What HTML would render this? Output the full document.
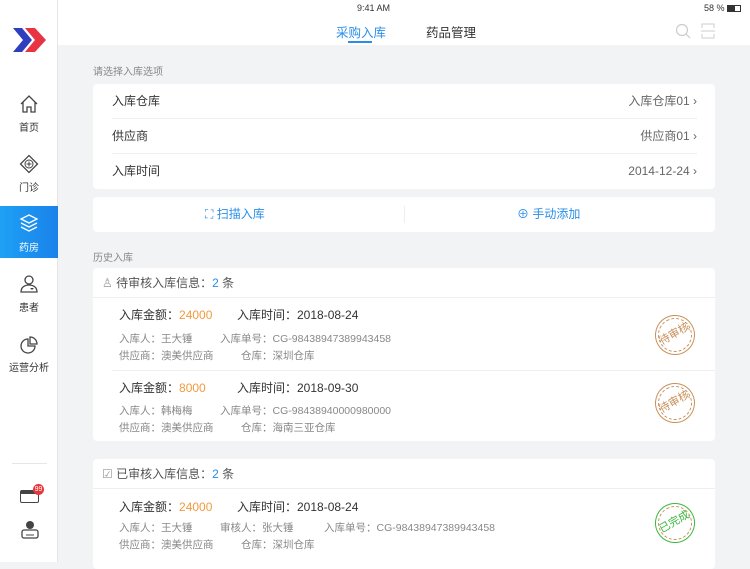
<!DOCTYPE html><html><head><meta charset="utf-8"><style>
*{margin:0;padding:0;box-sizing:border-box}
body{width:750px;height:562px;overflow:hidden;background:#f2f3f5;font-family:"Liberation Sans","Noto Sans CJK SC",sans-serif;position:relative;color:#333}
.a{position:absolute}
.side{left:0;top:0;width:58px;height:562px;background:#fff;border-right:1px solid #e6e6e6}
.nav{left:0;width:58px;text-align:center;font-size:10px;color:#333}
.card{background:#fff;border-radius:4px;left:93px;width:622px}
.row{left:19px;right:18px;height:35px;font-size:12px;line-height:35px;border-bottom:1px solid #eee}
.g{color:#888;font-size:10.5px}
.o{color:#f39a3c}
.stamp{width:40px;height:40px;border:1.5px solid #c8905a;border-radius:50%;color:#c8905a;font-size:11px;line-height:37px;text-align:center;transform:rotate(-30deg)}
.stamp:before{content:"";position:absolute;left:2px;top:2px;right:2px;bottom:2px;border:1px dashed #c8905a;border-radius:50%}
</style></head><body>
<div class="a" style="left:0;top:0;width:750px;height:45px;background:#fff"></div>
<div class="a" style="left:4px;top:3px;font-size:9px">GS ᯤ</div>
<div class="a" style="left:357px;top:3px;font-size:9px">9:41 AM</div>
<div class="a" style="left:704px;top:3px;font-size:9px">58 % <span style="display:inline-block;width:14px;height:7px;border:1px solid #333;vertical-align:-1px;background:linear-gradient(90deg,#333 58%,#fff 58%)"></span></div>
<div class="a" style="left:336px;top:22px;font-size:12.5px;color:#2a8ee8">采购入库</div>
<div class="a" style="left:348px;top:41px;width:24px;height:2px;background:#2a8ee8"></div>
<div class="a" style="left:426px;top:22px;font-size:12.5px">药品管理</div>
<svg class="a" style="left:675px;top:23px" width="40" height="16"><circle cx="7" cy="7" r="5.5" fill="none" stroke="#ccc" stroke-width="1.2"/><path d="M11 11l4 4" stroke="#ccc" stroke-width="1.2"/><path d="M27 5V1h12v4M27 11v4h12v-4M26 8h14" fill="none" stroke="#ccc"/></svg>
<div class="a side"></div>
<svg class="a" style="left:13px;top:28px" width="34" height="24"><path d="M0 0h9l10 12-10 12H0l10-12z" fill="#2d3fbf"/><path d="M12 0h10l11 12-11 12H12l10-12z" fill="#e63442"/></svg>
<svg class="a" style="left:19px;top:94px" width="20" height="20"><path d="M2 10L10 2l8 8M4 8v10h4v-5h4v5h4V8" fill="none" stroke="#444" stroke-width="1.3"/></svg>
<div class="a nav" style="top:119px">首页</div>
<svg class="a" style="left:19px;top:154px" width="20" height="20"><rect x="4" y="4" width="12" height="12" transform="rotate(45 10 10)" fill="none" stroke="#444" stroke-width="1.3"/><circle cx="10" cy="10" r="4" fill="none" stroke="#444"/><path d="M10 7.5v5M7.5 10h5" stroke="#444"/></svg>
<div class="a nav" style="top:179px">门诊</div>
<div class="a" style="left:0;top:206px;width:58px;height:52px;background:linear-gradient(90deg,#1ea0f5,#1a82ea)"></div>
<svg class="a" style="left:19px;top:213px" width="20" height="20"><path d="M10 2l8 4-8 4-8-4z M2 10l8 4 8-4 M2 14l8 4 8-4" fill="none" stroke="#fff" stroke-width="1.3"/></svg>
<div class="a nav" style="top:239px;color:#fff">药房</div>
<svg class="a" style="left:19px;top:274px" width="20" height="20"><circle cx="10" cy="6" r="4" fill="none" stroke="#444" stroke-width="1.3"/><path d="M2 18c0-5 4-7 8-7s8 2 8 7z" fill="none" stroke="#444" stroke-width="1.3"/><path d="M11 14h4l-2 2z" fill="#444"/></svg>
<div class="a nav" style="top:299px">患者</div>
<svg class="a" style="left:19px;top:335px" width="20" height="20"><path d="M9 4a7 7 0 1 0 7 7H9z" fill="none" stroke="#444" stroke-width="1.3"/><path d="M11 2a7 7 0 0 1 7 7h-7z" fill="none" stroke="#444" stroke-width="1.3"/></svg>
<div class="a nav" style="top:359px">运营分析</div>
<div class="a" style="left:12px;top:463px;width:35px;height:1px;background:#e6e6e6"></div>
<div class="a" style="left:20px;top:490px;width:19px;height:13px;border:1.5px solid #444;border-top:4px solid #444;border-radius:2px"></div>
<div class="a" style="left:33px;top:484px;width:11px;height:11px;background:#e8353b;border-radius:50%;color:#fff;font-size:7px;text-align:center;line-height:11px">99</div>
<svg class="a" style="left:20px;top:520px" width="20" height="20"><circle cx="10" cy="5" r="4" fill="#444"/><rect x="2" y="10" width="16" height="8" rx="2" fill="none" stroke="#444" stroke-width="1.3"/><path d="M6 15h8" stroke="#444"/></svg>
<div class="a g" style="left:93px;top:63px;font-size:10px">请选择入库选项</div>
<div class="a card" style="top:84px;height:105px">
 <div class="a row" style="top:0">入库仓库<span style="float:right;color:#666">入库仓库01 ›</span></div>
 <div class="a row" style="top:35px">供应商<span style="float:right;color:#666">供应商01 ›</span></div>
 <div class="a row" style="top:70px;border:none">入库时间<span style="float:right;color:#666">2014-12-24 ›</span></div>
</div>
<div class="a card" style="top:197px;height:35px;font-size:12px;color:#2a8ee8;line-height:35px">
 <div class="a" style="left:112px">⛶ 扫描入库</div>
 <div class="a" style="left:311px;top:9px;width:1px;height:17px;background:#eee"></div>
 <div class="a" style="left:424px">⊕ 手动添加</div>
</div>
<div class="a g" style="left:93px;top:249px;font-size:10px">历史入库</div>
<div class="a card" style="top:268px;height:173px">
 <div class="a" style="left:0;right:0;height:30px;border-bottom:1px solid #eee;line-height:30px;font-size:12px;color:#555;padding-left:9px"><span style="color:#999">♙</span> 待审核入库信息：<span style="color:#2a8ee8">2</span> 条</div>
 <div class="a" style="left:26px;top:38px;font-size:12px">入库金额：<span class="o">24000</span><span style="position:absolute;left:118px;white-space:nowrap">入库时间：2018-08-24</span></div>
 <div class="a g" style="left:26px;top:63px;white-space:nowrap">入库人：王大锤<span style="position:absolute;left:101px">入库单号：CG-98438947389943458</span></div>
 <div class="a g" style="left:26px;top:80px;white-space:nowrap">供应商：澳美供应商<span style="position:absolute;left:122px">仓库：深圳仓库</span></div>
 <div class="a stamp" style="left:562px;top:47px">待审核</div>
 <div class="a" style="left:19px;right:0;top:102px;height:1px;background:#eee"></div>
 <div class="a" style="left:26px;top:111px;font-size:12px">入库金额：<span class="o">8000</span><span style="position:absolute;left:118px;white-space:nowrap">入库时间：2018-09-30</span></div>
 <div class="a g" style="left:26px;top:135px;white-space:nowrap">入库人：韩梅梅<span style="position:absolute;left:101px">入库单号：CG-98438940000980000</span></div>
 <div class="a g" style="left:26px;top:152px;white-space:nowrap">供应商：澳美供应商<span style="position:absolute;left:122px">仓库：海南三亚仓库</span></div>
 <div class="a stamp" style="left:562px;top:115px">待审核</div>
</div>
<div class="a card" style="top:459px;height:110px">
 <div class="a" style="left:0;right:0;height:30px;border-bottom:1px solid #eee;line-height:30px;font-size:12px;color:#555;padding-left:9px"><span style="color:#999">☑</span> 已审核入库信息：<span style="color:#2a8ee8">2</span> 条</div>
 <div class="a" style="left:26px;top:39px;font-size:12px">入库金额：<span class="o">24000</span><span style="position:absolute;left:118px;white-space:nowrap">入库时间：2018-08-24</span></div>
 <div class="a g" style="left:26px;top:61px;white-space:nowrap">入库人：王大锤<span style="position:absolute;left:101px">审核人：张大锤</span><span style="position:absolute;left:205px">入库单号：CG-98438947389943458</span></div>
 <div class="a g" style="left:26px;top:78px;white-space:nowrap">供应商：澳美供应商<span style="position:absolute;left:122px">仓库：深圳仓库</span></div>
 <div class="a stamp" style="left:562px;top:44px;border-color:#3cb83c;color:#3cb83c">已完成</div>
</div>
</body></html>
